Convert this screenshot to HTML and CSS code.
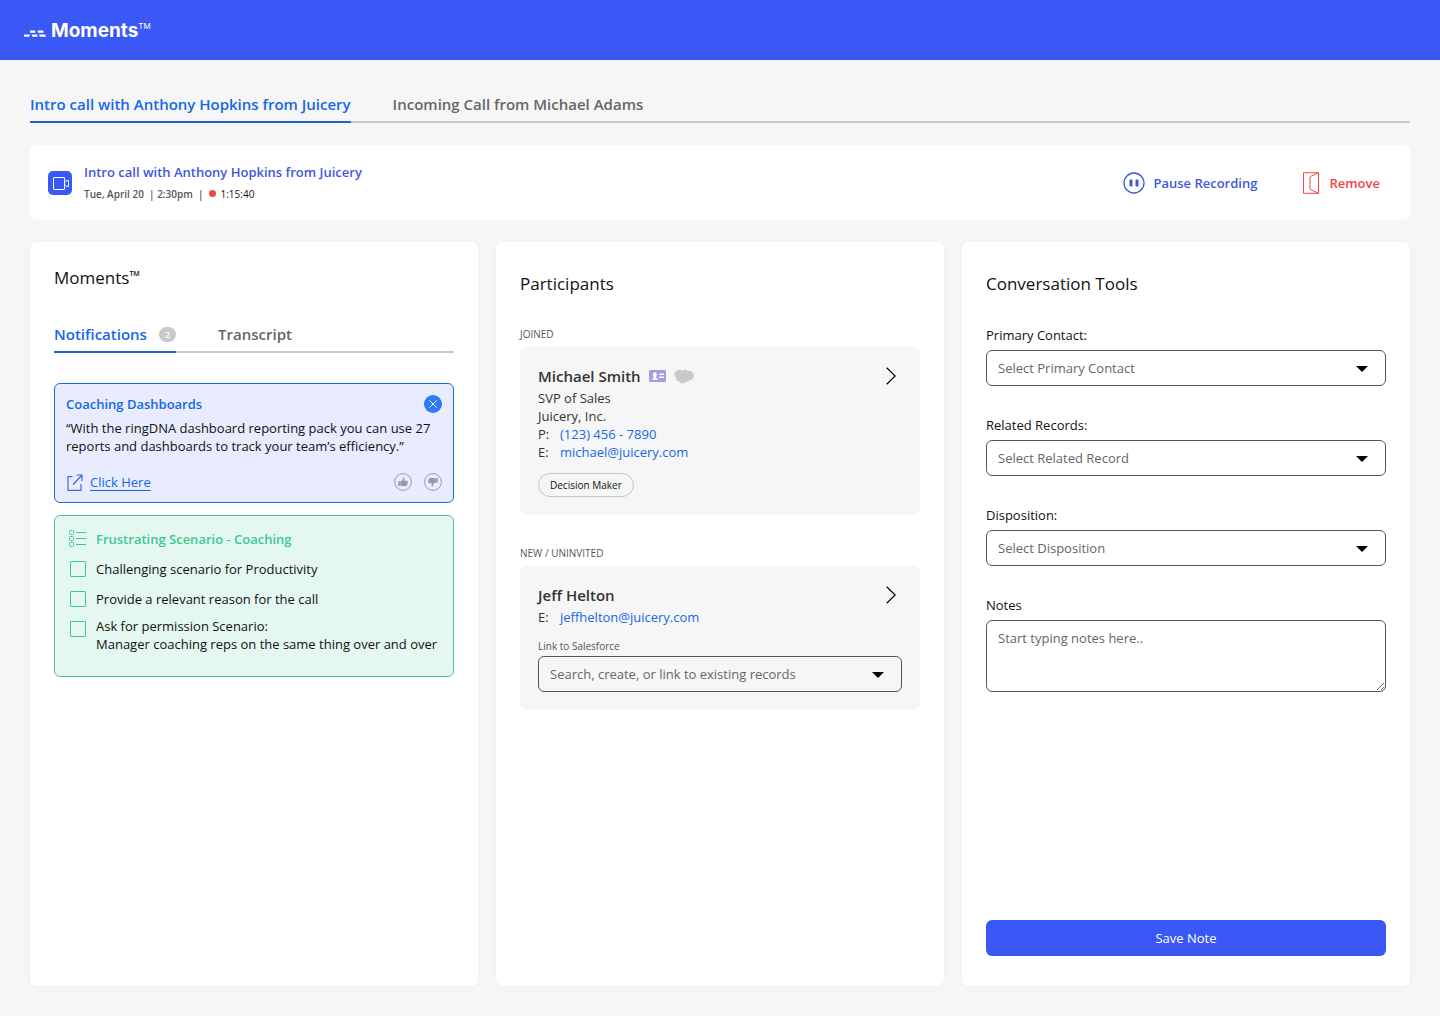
FILE: index.html
```html
<!DOCTYPE html>
<html lang="en">
<head>
<meta charset="UTF-8">
<meta name="viewport" content="width=device-width, initial-scale=1">
<title>Moments</title>
<link rel="stylesheet" href="styles.css">
</head>
<body>

<header class="topbar">
  <svg class="logo-mark" width="22" height="7" viewBox="0 0 22 7" fill="#fff" aria-hidden="true">
    <path d="M0 4.600h6l-.8 2.200H0zM7.500 4.600h6v2.200h-5zM15 4.600h6.200l.8 2.200h-6.200zM6 .5h5l.6 2.200H6zM13.500.5h6v2.200H14z"/>
  </svg>
  <span class="logo-text">Moments<span class="logo-tm">TM</span></span>
</header>

<main>
  <nav class="tabs call-tabs">
    <button type="button" class="tab active">Intro call with Anthony Hopkins from Juicery</button>
    <button type="button" class="tab">Incoming Call from Michael Adams</button>
  </nav>

  <section class="call-bar">
    <svg class="video-icon" width="24" height="24" viewBox="0 0 24 24" fill="none" stroke="#fff" aria-hidden="true">
      <rect width="24" height="24" rx="5" fill="#3a58f5" stroke="none"/>
      <rect x="5.500" y="6.500" width="11" height="12" rx="0.500"/>
      <path d="M16.500 11h1l1-1.500h2v6h-2l-1-1.500h-1"/>
    </svg>
    <div class="call-info">
      <h2>Intro call with Anthony Hopkins from Juicery</h2>
      <p><b>Tue, April 20 &nbsp;| 2:30pm &nbsp;|</b> <span class="rec-dot"></span> <span class="timer">1:15:40</span></p>
    </div>
    <div class="call-actions">
      <button type="button" class="action pause">
        <svg width="22" height="22" viewBox="0 0 22 22" fill="none" stroke="currentColor" aria-hidden="true">
          <circle cx="11" cy="11" r="10" stroke-width="1.300"/>
          <rect x="6.500" y="7.500" width="3" height="7" rx="1" fill="currentColor" stroke="none"/>
          <rect x="12.500" y="7.500" width="3" height="7" rx="1" fill="currentColor" stroke="none"/>
        </svg>
        Pause Recording
      </button>
      <button type="button" class="action remove">
        <svg width="16" height="22" viewBox="0 0 16 22" fill="none" stroke="currentColor" aria-hidden="true">
          <path d="M.5.7h15v20.600H.5zM15.500.700L8 4.200q-1 .5-1 1.300v11q0 .8 1 1.300l7.500 3.500"/>
        </svg>
        Remove
      </button>
    </div>
  </section>

  <div class="columns">
    <section class="panel moments">
      <h3>Moments<span class="tm">TM</span></h3>
      <nav class="tabs">
        <button type="button" class="tab active">Notifications <span class="count">2</span></button>
        <button type="button" class="tab">Transcript</button>
      </nav>

      <article class="note blue">
        <div class="note-head">
          <h4>Coaching Dashboards</h4>
          <button type="button" class="icon-btn" aria-label="Dismiss">
            <svg width="18" height="18" viewBox="0 0 18 18" aria-hidden="true">
              <circle cx="9" cy="9" r="9" fill="#2b7bf6"/>
              <path d="M5.300 5.300l7.400 7.400M12.700 5.300l-7.400 7.400" stroke="#fff" fill="none"/>
            </svg>
          </button>
        </div>
        <p>“With the ringDNA dashboard reporting pack you can use 27 reports and dashboards to track your team’s efficiency.”</p>
        <div class="note-foot">
          <svg width="16" height="17" viewBox="0 0 16 17" fill="none" stroke="#2f6fe0" stroke-width="1.200" aria-hidden="true">
            <path d="M5.500 2.600H1v13.800h13V10M6 10.500L15 1M9.500 1H15v6"/>
          </svg>
          <a href="#">Click Here</a>
          <div class="votes">
            <button type="button" class="icon-btn" aria-label="Helpful">
              <svg width="18" height="18" viewBox="0 0 18 18" aria-hidden="true">
                <circle cx="9" cy="9" r="8.400" fill="none" stroke="#989ba6" stroke-width="1"/>
                <path class="thumb" d="M4.300 8.300h2.400v4.700H4.300zM6.900 8.300L8.900 6.500V4.600q1.600-.5 1.700 1.400l-.4 1.700h2.900q1.100.3.700 1.500l-.8 3q-.2.800-1.100.8H8.300l-1.400-.6z"/>
              </svg>
            </button>
            <button type="button" class="icon-btn" aria-label="Not helpful">
              <svg width="18" height="18" viewBox="0 0 18 18" aria-hidden="true">
                <circle cx="9" cy="9" r="8.400" fill="none" stroke="#989ba6" stroke-width="1"/>
                <path class="thumb" d="M13.700 9.700h-2.400V5h2.400zM11.100 9.700l-2 1.800v1.900q-1.600.5-1.700-1.400l.4-1.700H4.900q-1.100-.3-.7-1.500l.8-3Q5.200 5 6.100 5h3.600l1.400.6z"/>
              </svg>
            </button>
          </div>
        </div>
      </article>

      <article class="note green">
        <div class="list-head">
          <svg width="17" height="17" viewBox="0 0 17 17" fill="none" stroke="#3fc691" aria-hidden="true">
            <rect x=".5" y=".5" width="4" height="4" rx="1"/>
            <rect x=".5" y="6.500" width="4" height="4" rx="1"/>
            <rect x=".5" y="12.500" width="4" height="4" rx="1"/>
            <path d="M7 2.500h10M7 8.500h10M7 14.500h10"/>
          </svg>
          <h4>Frustrating Scenario - Coaching</h4>
        </div>
        <label class="check"><input type="checkbox"> <span>Challenging scenario for Productivity</span></label>
        <label class="check"><input type="checkbox"> <span>Provide a relevant reason for the call</span></label>
        <label class="check two-line"><input type="checkbox"> <span>Ask for permission Scenario:<br>Manager coaching reps on the same thing over and over</span></label>
      </article>
    </section>

    <section class="panel">
      <h3>Participants</h3>

      <h5>JOINED</h5>
      <article class="person joined">
        <div class="person-head">
          <h4>Michael Smith</h4>
          <svg width="17" height="12" viewBox="0 0 17 12" aria-hidden="true">
            <rect width="17" height="12" rx="1.500" fill="#a79be6"/>
            <path d="M3 9.800q0-1.800 2-2.200-1-1-1-3 0-2.400 1.900-2.400t1.900 2.400q0 2-1 3 2 .4 2 2.200zM10 3.600h5v1.300h-5zM10 6.600h5v1.300h-5z" fill="#fff"/>
          </svg>
          <svg width="20" height="15" viewBox="0 0 20 15" aria-hidden="true">
            <path d="M8.300 1.700Q9.600.5 11.400.8q1.400.2 2.100 1.300 1.600-.8 3.200-.1Q20 3.500 19.800 7q-.4 4-4.400 4.300-.8 1.500-2.500 1.400-.6 0-1-.2Q11 14.700 8.700 14.600q-2.300-.1-3.100-2.300-2.300.2-3.100-1.600-.4-.9-.2-1.900Q.2 7.700.3 5.300.8 2.400 3.300 1.200q3-1.200 5 .5z" fill="#c9c9c9"/>
          </svg>
          <button type="button" class="icon-btn next" aria-label="Open Michael Smith">
            <svg width="10" height="18" viewBox="0 0 10 18" fill="none" stroke="#000" stroke-width="1.200" aria-hidden="true"><path d="M.7.800L9.200 9 .7 17.200"/></svg>
          </button>
        </div>
        <p>SVP of Sales</p>
        <p>Juicery, Inc.</p>
        <p><span class="key">P:</span><a href="tel:1234567890">(123) 456 - 7890</a></p>
        <p><span class="key">E:</span><a href="mailto:michael@juicery.com">michael@juicery.com</a></p>
        <span class="tag">Decision Maker</span>
      </article>

      <h5>NEW / UNINVITED</h5>
      <article class="person">
        <div class="person-head">
          <h4>Jeff Helton</h4>
          <button type="button" class="icon-btn next" aria-label="Open Jeff Helton">
            <svg width="10" height="18" viewBox="0 0 10 18" fill="none" stroke="#000" stroke-width="1.200" aria-hidden="true"><path d="M.7.800L9.200 9 .7 17.200"/></svg>
          </button>
        </div>
        <p><span class="key">E:</span><a href="mailto:jeffhelton@juicery.com">jeffhelton@juicery.com</a></p>
        <label class="small-label" for="link">Link to Salesforce</label>
        <div class="select">
          <select id="link"><option>Search, create, or link to existing records</option></select>
        </div>
      </article>
    </section>

    <section class="panel tools">
      <h3>Conversation Tools</h3>
      <div class="field">
        <label for="contact">Primary Contact:</label>
        <div class="select">
          <select id="contact"><option>Select Primary Contact</option></select>
        </div>
      </div>
      <div class="field">
        <label for="records">Related Records:</label>
        <div class="select">
          <select id="records"><option>Select Related Record</option></select>
        </div>
      </div>
      <div class="field">
        <label for="disposition">Disposition:</label>
        <div class="select">
          <select id="disposition"><option>Select Disposition</option></select>
        </div>
      </div>
      <div class="field">
        <label for="notes">Notes</label>
        <textarea id="notes" placeholder="Start typing notes here.."></textarea>
      </div>
      <button type="button" class="save">Save Note</button>
    </section>
  </div>
</main>

</body>
</html>
```
FILE: styles.css
```css
* {
  box-sizing: border-box;
}
body {
  margin: 0;
  min-height: 100vh;
  display: flex;
  flex-direction: column;
  background: #f6f6f6;
  color: #111;
  font-family: "Open Sans", "Noto Sans", sans-serif;
  font-size: 13px;
  line-height: 18px;
}
h2, h3, h4, h5, p {
  margin: 0;
}
button, select, textarea {
  font: inherit;
}
button {
  border: none;
  background: none;
  padding: 0;
  cursor: pointer;
}
svg {
  display: block;
  flex-shrink: 0;
}
a {
  color: #1568e8;
  text-decoration: none;
}

/* header */
.topbar {
  height: 60px;
  padding: 2px 24px 0;
  display: flex;
  align-items: center;
  gap: 5px;
  background: #3a58f5;
  color: #fff;
}
.logo-mark {
  margin-top: 4px;
}
.logo-text {
  display: flex;
  font-family: Inter, sans-serif;
  font-size: 19px;
  font-weight: 700;
  line-height: 24px;
}
.logo-tm {
  font-size: 8px;
  font-weight: 400;
  line-height: 14px;
}

main {
  flex: 1;
  display: flex;
  flex-direction: column;
  padding: 30px;
}

/* tabs */
.tabs {
  display: flex;
  gap: 42px;
  box-shadow: inset 0 -2px #c8c8c8;
}
.tab {
  display: flex;
  align-items: center;
  gap: 12px;
  padding: 0 0 7px;
  border-bottom: 2px solid transparent;
  color: #666;
  font-size: 15px;
  font-weight: 600;
  line-height: 20px;
}
.tab.active {
  color: #1568e8;
  border-color: #1c64cf;
}
.call-tabs {
  margin: 4px 0 22px;
}
.count {
  padding: 0 6px;
  border-radius: 8px;
  background: #c8c8c8;
  color: #fff;
  font-size: 9px;
  line-height: 15px;
}

/* call bar */
.call-bar {
  display: flex;
  align-items: center;
  gap: 12px;
  min-height: 75px;
  padding: 0 30px 0 18px;
  border-radius: 7px;
  background: #fff;
}
.call-info h2 {
  color: #3f58dc;
  font-size: 13px;
  font-weight: 600;
  line-height: 22px;
}
.call-info p {
  display: flex;
  align-items: center;
  gap: 5px;
  color: #555;
  font-size: 10px;
  line-height: 22px;
}
.call-info b {
  font-weight: 600;
}
.rec-dot {
  width: 7px;
  height: 7px;
  border-radius: 50%;
  background: #f24444;
}
.timer {
  color: #111;
}
.call-actions {
  display: flex;
  gap: 46px;
  margin-left: auto;
}
.action {
  display: flex;
  align-items: center;
  gap: 8px;
  font-weight: 600;
}
.pause {
  color: #3f58dc;
}
.remove {
  color: #f04848;
  gap: 10px;
}

/* columns */
.columns {
  flex: 1;
  display: grid;
  grid-template-columns: repeat(3, 1fr);
  gap: 18px;
  margin-top: 22px;
}
.panel {
  display: flex;
  flex-direction: column;
  padding: 30px 24px;
  border-radius: 7px;
  background: #fff;
  box-shadow: 0 0 6px rgba(0, 0, 0, 0.03);
}
.panel h3 {
  margin-bottom: 30px;
  font-size: 17px;
  font-weight: 400;
  line-height: 24px;
}
.panel.moments {
  padding-top: 24px;
}
.tm {
  font-size: 7px;
  font-weight: 600;
  vertical-align: 8px;
  line-height: 1;
}
.moments h3 {
  margin-bottom: 34px;
}

/* notifications */
.note {
  margin-top: 12px;
  border: 1px solid #1c6ad6;
  border-radius: 6px;
}
.tabs + .note {
  margin-top: 30px;
}
.note h4 {
  font-size: 13px;
  font-weight: 600;
}
.blue {
  padding: 11px;
  background: #e8ecfe;
}
.blue h4 {
  color: #1568e8;
}
.note-head {
  display: flex;
  justify-content: space-between;
  margin-bottom: 6px;
}
.note-foot {
  display: flex;
  align-items: center;
  gap: 7px;
  margin: 18px 0 0 1px;
}
.note-foot a {
  text-decoration: underline;
  text-underline-offset: 3px;
}
.votes {
  display: flex;
  gap: 12px;
  margin-left: auto;
}
.thumb {
  fill: #989ba6;
}
.green {
  display: flex;
  flex-direction: column;
  gap: 12px;
  padding: 14px 8px 23px 14px;
  border-color: #4dc296;
  background: #e4f8f1;
}
.green h4 {
  color: #3fc691;
}
.list-head,
.check {
  display: flex;
  gap: 10px;
}
.check {
  padding-left: 1px;
}
.check input {
  appearance: none;
  flex-shrink: 0;
  width: 16px;
  height: 16px;
  margin: 1px 0;
  border: 1px solid #3fc691;
  border-radius: 1px;
}
.check input:checked {
  background: #3fc691;
}
.two-line {
  margin-top: -3px;
}
.two-line input {
  margin-top: 4px;
}

/* participants */
h5 {
  margin-bottom: 5px;
  color: #555;
  font-size: 10px;
  font-weight: 400;
  line-height: 16px;
}
.person {
  margin-bottom: 30px;
  padding: 18px;
  border-radius: 7px;
  background: #f6f6f6;
  color: #333;
}
.person-head {
  display: flex;
  align-items: center;
  gap: 8px;
  margin-bottom: 2px;
}
.person h4 {
  font-size: 15px;
  font-weight: 600;
  line-height: 22px;
}
.next {
  margin: 0 6px 0 auto;
}
.key {
  display: inline-block;
  width: 22px;
}
.tag {
  display: inline-block;
  margin-top: 12px;
  padding: 0 11px;
  border: 1px solid #c4c4c4;
  border-radius: 12px;
  color: #111;
  font-size: 10px;
  line-height: 22px;
}
.small-label {
  display: block;
  margin: 11px 0 1px;
  color: #555;
  font-size: 10px;
}

/* form fields */
.field {
  margin-bottom: 30px;
}
.field label {
  display: block;
  margin-bottom: 6px;
}
.select {
  position: relative;
}
.select::after {
  content: "";
  position: absolute;
  right: 18px;
  top: 50%;
  margin-top: -2px;
  border: 6px solid transparent;
  border-top-color: #000;
  border-bottom: none;
  pointer-events: none;
}
select,
textarea {
  display: block;
  width: 100%;
  padding: 0 11px;
  border: 1px solid #555;
  border-radius: 6px;
  background: transparent;
  color: #666;
}
select {
  appearance: none;
  height: 36px;
}
textarea {
  height: 72px;
  padding: 8px 11px;
  resize: vertical;
}
textarea::placeholder {
  color: #666;
}
.save {
  height: 36px;
  margin-top: auto;
  border-radius: 6px;
  background: #3a58f5;
  color: #fff;
}
```
